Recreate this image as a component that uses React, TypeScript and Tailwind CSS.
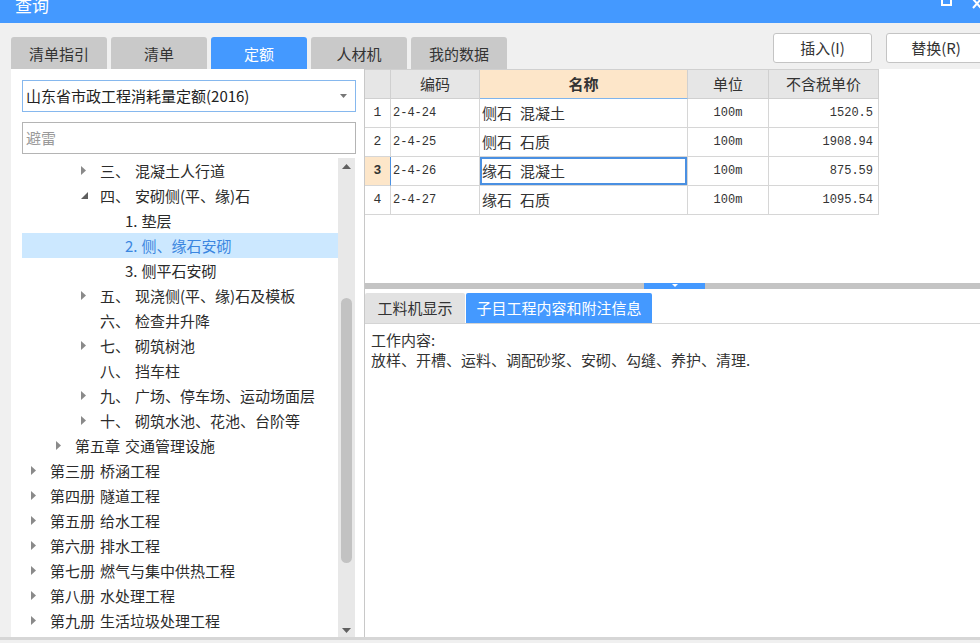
import React from "react";

type Node = { lvl: 1 | 2 | 3 | 4; tri?: "r" | "d"; num?: string; label: string; sel?: boolean };

const tree: Node[] = [
  { lvl: 3, tri: "r", num: "三、", label: "混凝土人行道" },
  { lvl: 3, tri: "d", num: "四、", label: "安砌侧(平、缘)石" },
  { lvl: 4, num: "1.", label: "垫层" },
  { lvl: 4, num: "2.", label: "侧、缘石安砌", sel: true },
  { lvl: 4, num: "3.", label: "侧平石安砌" },
  { lvl: 3, tri: "r", num: "五、", label: "现浇侧(平、缘)石及模板" },
  { lvl: 3, num: "六、", label: "检查井升降" },
  { lvl: 3, tri: "r", num: "七、", label: "砌筑树池" },
  { lvl: 3, num: "八、", label: "挡车柱" },
  { lvl: 3, tri: "r", num: "九、", label: "广场、停车场、运动场面层" },
  { lvl: 3, tri: "r", num: "十、", label: "砌筑水池、花池、台阶等" },
  { lvl: 2, tri: "r", num: "第五章", label: "交通管理设施" },
  { lvl: 1, tri: "r", num: "第三册", label: "桥涵工程" },
  { lvl: 1, tri: "r", num: "第四册", label: "隧道工程" },
  { lvl: 1, tri: "r", num: "第五册", label: "给水工程" },
  { lvl: 1, tri: "r", num: "第六册", label: "排水工程" },
  { lvl: 1, tri: "r", num: "第七册", label: "燃气与集中供热工程" },
  { lvl: 1, tri: "r", num: "第八册", label: "水处理工程" },
  { lvl: 1, tri: "r", num: "第九册", label: "生活垃圾处理工程" },
  { lvl: 1, tri: "r", num: "第十册", label: "路灯工程" },
];

const padFor: Record<number, string> = {
  1: "pl-[9px]",
  2: "pl-[34px]",
  3: "pl-[59px]",
  4: "pl-[84px]",
};

const rows = [
  { n: "1", code: "2-4-24", a: "侧石", b: "混凝土", unit: "100m", price: "1520.5" },
  { n: "2", code: "2-4-25", a: "侧石", b: "石质", unit: "100m", price: "1908.94" },
  { n: "3", code: "2-4-26", a: "缘石", b: "混凝土", unit: "100m", price: "875.59", sel: true },
  { n: "4", code: "2-4-27", a: "缘石", b: "石质", unit: "100m", price: "1095.54" },
];

function TriRight() {
  return (
    <svg width="5" height="9" viewBox="0 0 5 9">
      <path d="M0 0 L5 4.5 L0 9 Z" fill="#8a8a8a" />
    </svg>
  );
}

function TriDown() {
  return (
    <svg width="7" height="7" viewBox="0 0 7 7">
      <path d="M7 0 L7 7 L0 7 Z" fill="#5e5e5e" />
    </svg>
  );
}

const MONO = "font-['Liberation_Mono',monospace]";

export default function App() {
  return (
    <div className="w-[980px] h-[643px] overflow-hidden bg-[#f0f0f0] flex flex-col font-['Noto_Sans_CJK_SC','Noto_Sans',sans-serif] text-[#333]">
      {/* Title bar */}
      <div className="h-[23px] shrink-0 bg-[#4499ff] flex items-start justify-between overflow-hidden">
        <div className="ml-[15px] -mt-[4px] text-[17px] leading-[17px] text-white">查询</div>
        <div className="flex items-start gap-[20px]">
          <div className="w-[11px] h-[10px] -mt-[4px] border-2 border-white"></div>
          <svg width="10" height="9" viewBox="0 0 10 9" className="mr-[-2px]">
            <path d="M1 -1 L9 8 M9 -1 L1 8" stroke="white" strokeWidth="2" />
          </svg>
        </div>
      </div>

      {/* Tabs + buttons */}
      <div className="h-[46px] shrink-0 flex justify-between">
        <div className="flex items-end gap-[4px] pl-[11px]">
          {["清单指引", "清单", "定额", "人材机", "我的数据"].map((t) => (
            <div
              key={t}
              className={
                "w-[96px] h-[32px] rounded-t-[3px] flex items-center justify-center text-[15px] leading-[15px] " +
                (t === "定额" ? "bg-[#4499ff] text-white" : "bg-[#c9c9c9] text-[#333]")
              }
            >
              {t}
            </div>
          ))}
        </div>
        <div className="flex items-start gap-[14px] pt-[10px] mr-[-6px]">
          <div className="w-[99px] h-[30px] bg-white border border-[#c4c4c4] rounded-[3px] flex items-center justify-center text-[15px] text-[#333]">
            插入(I)
          </div>
          <div className="w-[100px] h-[30px] bg-white border border-[#c4c4c4] rounded-[3px] flex items-center justify-center text-[15px] text-[#333]">
            替换(R)
          </div>
        </div>
      </div>

      {/* Main */}
      <div className="h-[571px] shrink-0 flex pl-[11px] border-b-[3px] border-[#d6d6d6]">
        {/* Left panel */}
        <div className="w-[353px] bg-white flex flex-col pl-[11px] pr-[8px] overflow-hidden">
          <div className="mt-[11px] h-[32px] border border-[#86b8ee] flex items-center justify-between pl-[3px] pr-[8px] text-[15px] text-[#222]">
            <span>山东省市政工程消耗量定额(2016)</span>
            <svg width="7" height="4" viewBox="0 0 7 4">
              <path d="M0 0 L7 0 L3.5 4 Z" fill="#777" />
            </svg>
          </div>
          <div className="mt-[10px] h-[32px] border border-[#b4b4b4] flex items-center pl-[3px] text-[15px] text-[#9a9a9a]">
            避雷
          </div>
          <div className="mt-[4px] flex flex-1 min-h-0">
            <div className="w-[316px] flex flex-col overflow-hidden">
              {tree.map((n, i) => (
                <div
                  key={i}
                  className={
                    "h-[25px] shrink-0 flex items-center text-[15px] leading-[15px] " +
                    padFor[n.lvl] +
                    (n.sel ? " bg-[#cce8ff] text-[#3b86e0]" : " text-[#2b2b2b]")
                  }
                >
                  <div className="w-[19px] shrink-0 flex items-center">
                    {n.tri === "r" ? <TriRight /> : n.tri === "d" ? <TriDown /> : null}
                  </div>
                  <div className={"flex " + (n.lvl === 4 ? "gap-[4px]" : "gap-[5px]")}>
                    {n.num && <span className="whitespace-nowrap">{n.num}</span>}
                    <span className="whitespace-nowrap">{n.label}</span>
                  </div>
                </div>
              ))}
            </div>
            <div className="w-[17px] bg-[#e8e8e8] flex flex-col items-center">
              <div className="h-[17px] flex items-center justify-center">
                <svg width="9" height="5" viewBox="0 0 9 5">
                  <path d="M0 5 L9 5 L4.5 0 Z" fill="#606060" />
                </svg>
              </div>
              <div className="h-[123px]"></div>
              <div className="w-[11px] h-[265px] rounded-full bg-[#c2c2c2]"></div>
              <div className="flex-1"></div>
              <div className="h-[14px] flex items-center justify-center">
                <svg width="9" height="5" viewBox="0 0 9 5">
                  <path d="M0 0 L9 0 L4.5 5 Z" fill="#606060" />
                </svg>
              </div>
            </div>
          </div>
        </div>

        {/* Right panel */}
        <div className="flex-1 bg-white border-l border-[#c8c8c8] flex flex-col">
          <div className="h-[214px] shrink-0">
            <div className="w-[514px] flex flex-col border-t border-[#d0d0d0]">
              <div className="h-[29px] flex text-[15px]">
                <div className="w-[26px] bg-[#e6e6e6] border-r border-b border-[#d0d0d0]"></div>
                <div className="w-[89px] bg-[#e6e6e6] border-r border-b border-[#d0d0d0] flex items-center justify-center">编码</div>
                <div className="w-[208px] bg-[#fde6c9] border-r border-b border-r-[#d0d0d0] border-b-[#7fb4ec] flex items-center justify-center font-bold">名称</div>
                <div className="w-[81px] bg-[#e6e6e6] border-r border-b border-[#d0d0d0] flex items-center justify-center">单位</div>
                <div className="w-[110px] bg-[#e6e6e6] border-r border-b border-[#d0d0d0] flex items-center justify-center">不含税单价</div>
              </div>
              {rows.map((r) => (
                <div key={r.n} className="h-[29px] flex">
                  <div
                    className={
                      "w-[26px] border-r border-b border-[#d6d6d6] flex items-center justify-center text-[13px] " +
                      MONO +
                      (r.sel ? " bg-[#fde6c9] font-bold border-r-[#4a90e2]" : "")
                    }
                  >
                    {r.n}
                  </div>
                  <div className={"w-[89px] border-r border-b border-[#d6d6d6] flex items-center pl-[2px] text-[12px] " + MONO}>
                    {r.code}
                  </div>
                  <div
                    className={
                      "w-[208px] border-r border-b border-[#d6d6d6] flex items-center gap-[8px] pl-[2px] text-[15px] " +
                      (r.sel ? "shadow-[inset_0_0_0_2px_#4a90e2]" : "")
                    }
                  >
                    <span>{r.a}</span>
                    <span>{r.b}</span>
                  </div>
                  <div className={"w-[81px] border-r border-b border-[#d6d6d6] flex items-center justify-center text-[12px] " + MONO}>
                    {r.unit}
                  </div>
                  <div className={"w-[110px] border-r border-b border-[#d6d6d6] flex items-center justify-end pr-[5px] text-[12px] " + MONO}>
                    {r.price}
                  </div>
                </div>
              ))}
            </div>
          </div>
          {/* splitter */}
          <div className="h-[6px] shrink-0 bg-[#c4c4c4] flex">
            <div className="w-[279px]"></div>
            <div className="w-[61px] bg-[#4499ff] flex justify-center items-start pt-[1px]">
              <svg width="6" height="3" viewBox="0 0 6 3">
                <path d="M0 0 L6 0 L3 3 Z" fill="white" />
              </svg>
            </div>
          </div>
          <div className="h-[4px] shrink-0"></div>
          {/* bottom tabs */}
          <div className="h-[31px] shrink-0 flex border-b border-[#d4d4d4]">
            <div className="w-[100px] bg-[#e2e2e2] flex items-center justify-center text-[15px] text-[#333] rounded-t-[2px]">
              工料机显示
            </div>
            <div className="w-[186px] ml-[1px] bg-[#4499ff] flex items-center justify-center text-[15px] text-white rounded-t-[2px]">
              子目工程内容和附注信息
            </div>
          </div>
          <div className="pl-[6px] pt-[6px] text-[15px] leading-[20px] text-[#333]">
            <div>工作内容:</div>
            <div>放样、开槽、运料、调配砂浆、安砌、勾缝、养护、清理.</div>
          </div>
        </div>
      </div>
    </div>
  );
}
